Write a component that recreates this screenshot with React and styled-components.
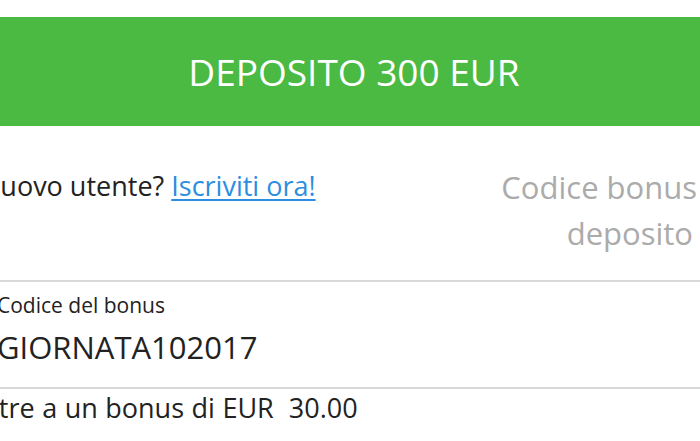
import React from "react";
import styled, { createGlobalStyle } from "styled-components";

const GlobalStyle = createGlobalStyle`
  html, body {
    margin: 0;
    padding: 0;
    background: #ffffff;
    overflow: hidden;
  }
  body {
    font-family: "Open Sans", "Noto Sans", sans-serif;
  }
`;

const Page = styled.div`
  width: 730px;
  margin-left: -30px;
  padding-top: 17px;
`;

const DepositButton = styled.button`
  display: flex;
  align-items: center;
  justify-content: center;
  width: 100%;
  height: 109px;
  padding: 0 0 0 38px;
  border: none;
  background-color: #4aba42;
  color: #ffffff;
  font-family: inherit;
  font-size: 37px;
  font-weight: 400;
`;

const InfoRow = styled.div`
  display: flex;
  justify-content: space-between;
  align-items: flex-start;
  height: 154px;
  box-sizing: border-box;
  padding: 38px 3px 0 10px;
`;

const NewUser = styled.div`
  font-size: 27px;
  line-height: 36px;
  color: #222;
  margin-top: 4px;
`;

const SignUp = styled.a`
  color: #2b8ee0;
  text-decoration: underline;
  text-decoration-thickness: 2px;
  text-underline-offset: 3px;
  cursor: pointer;
`;

const BonusCodeLink = styled.div`
  font-size: 31px;
  line-height: 46px;
  color: #ababab;
  text-align: right;
`;

const SecondLine = styled.span`
  padding-right: 4px;
`;

const Divider = styled.div`
  height: 2px;
  background: #d9d9d9;
`;

const Field = styled.div`
  padding: ${(p) => `${p.top}px 0 0 ${p.indent}px`};
  height: ${(p) => p.height}px;
  box-sizing: border-box;
`;

const FieldLabel = styled.div`
  font-size: 21px;
  line-height: 28px;
  color: #222;
`;

const FieldValue = styled.div`
  font-size: 31px;
  line-height: 42px;
  color: #222;
  margin-top: 7px;
`;

const BonusLine = styled.div`
  font-size: 27px;
  line-height: 36px;
  color: #222;
  padding: 1px 0 0 1px;
  white-space: pre;
  word-spacing: 0.5px;
`;

export default function App() {
  return (
    <>
      <GlobalStyle />
      <Page>
        <DepositButton>DEPOSITO 300 EUR</DepositButton>
        <InfoRow>
          <NewUser>
            Nuovo utente? <SignUp>Iscriviti ora!</SignUp>
          </NewUser>
          <BonusCodeLink>
            Codice bonus
            <br />
            <SecondLine>deposito</SecondLine>
          </BonusCodeLink>
        </InfoRow>
        <Divider />
        <Field indent={27} top={9} height={105}>
          <FieldLabel>Codice del bonus</FieldLabel>
          <FieldValue>GIORNATA102017</FieldValue>
        </Field>
        <Divider />
        <BonusLine>Oltre a un bonus di EUR  30.00</BonusLine>
      </Page>
    </>
  );
}
